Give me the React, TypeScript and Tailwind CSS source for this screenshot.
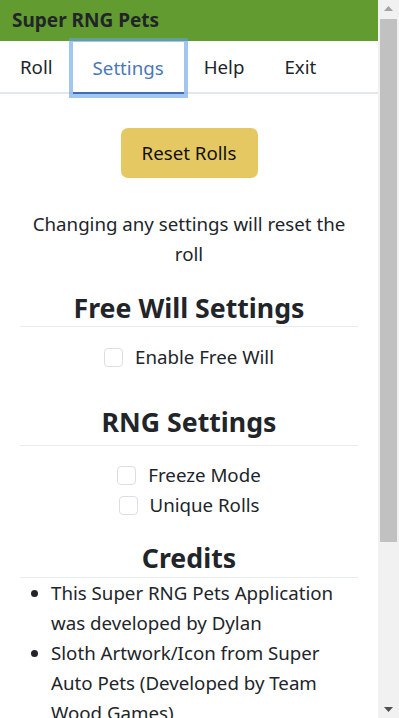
import React from "react";

const font = { fontFamily: '"Noto Sans", "Open Sans", sans-serif' };

function Check({ label }: { label: string }) {
  return (
    <div className="flex items-center justify-center h-[30px]">
      <span className="w-[19px] h-[19px] border border-[#dadfe5] rounded-[4px] bg-white" />
      <span className="ml-[12px] text-[18.7px] leading-[30px] text-[#212529]">{label}</span>
    </div>
  );
}

function Heading({ children }: { children: React.ReactNode }) {
  return (
    <div className="mx-5">
      <h3 className="text-center text-[26.7px] leading-[34px] font-bold text-[#212529]">{children}</h3>
    </div>
  );
}

export default function App() {
  return (
    <div className="flex w-[399px] h-[718px] overflow-hidden bg-white" style={font}>
      <div className="w-[378px] h-[718px] overflow-hidden flex flex-col">
        <div className="h-[41px] bg-[#629b2f] flex items-center pl-3 shrink-0">
          <span className="text-[19px] font-bold text-[#212529] leading-none">Super RNG Pets</span>
        </div>
        <div className="flex h-[53px] border-b-2 border-[#e3e7eb] shrink-0">
          <div className="px-5 pt-[11px] text-[18.7px] leading-[30px] text-[#212529]">Roll</div>
          <div className="px-5 pt-[11px] text-[18.7px] leading-[30px] text-[#4a78b8] border-b-2 border-[#3d6db3] -mb-[2px] mt-[1px] bg-white shadow-[0_0_0_4px_rgba(100,160,225,0.6)]">
            Settings
          </div>
          <div className="px-5 pt-[11px] text-[18.7px] leading-[30px] text-[#212529]">Help</div>
          <div className="px-5 pt-[11px] text-[18.7px] leading-[30px] text-[#212529]">Exit</div>
        </div>
        <div className="flex justify-center mt-[34px]">
          <button className="w-[137px] h-[50px] rounded-[7px] bg-[#e5c862] text-[18.7px] text-[#111] leading-none">
            Reset Rolls
          </button>
        </div>
        <p className="mt-[31px] mx-5 text-center text-[18.7px] leading-[30px] text-[#212529]">
          Changing any settings will reset the roll
        </p>
        <div className="mt-[22px]">
          <Heading>Free Will Settings</Heading>
          <div className="mx-5 mt-[1px] border-t border-[#e9ecef]" />
          <div className="mt-[15px]">
            <Check label="Enable Free Will" />
          </div>
        </div>
        <div className="mt-[33px]">
          <Heading>RNG Settings</Heading>
          <div className="mx-5 mt-[6px] border-t border-[#e9ecef]" />
          <div className="mt-[14px]">
            <Check label="Freeze Mode" />
            <Check label="Unique Rolls" />
          </div>
        </div>
        <div className="mt-[21px]">
          <Heading>Credits</Heading>
          <div className="mx-5 mt-[2px] border-t border-[#e9ecef]" />
          <ul className="list-disc pl-[51px] pr-5 text-[18.7px] leading-[30px] text-[#212529]">
            <li>This Super RNG Pets Application was developed by Dylan</li>
            <li>Sloth Artwork/Icon from Super Auto Pets (Developed by Team Wood Games)</li>
          </ul>
        </div>
      </div>
      <div className="w-[21px] h-[718px] bg-[#f1f1f1] flex flex-col items-center shrink-0">
        <div className="h-[17px] flex items-center justify-center">
          <svg width="9" height="5" viewBox="0 0 9 5"><polygon points="0,5 9,5 4.5,0" fill="#a3a3a3" /></svg>
        </div>
        <div className="w-[17px] h-[523px] bg-[#c1c1c1] mt-[2px]" />
        <div className="flex-1" />
        <div className="h-[17px] flex items-center justify-center">
          <svg width="9" height="5" viewBox="0 0 9 5"><polygon points="0,0 9,0 4.5,5" fill="#505050" /></svg>
        </div>
      </div>
    </div>
  );
}
